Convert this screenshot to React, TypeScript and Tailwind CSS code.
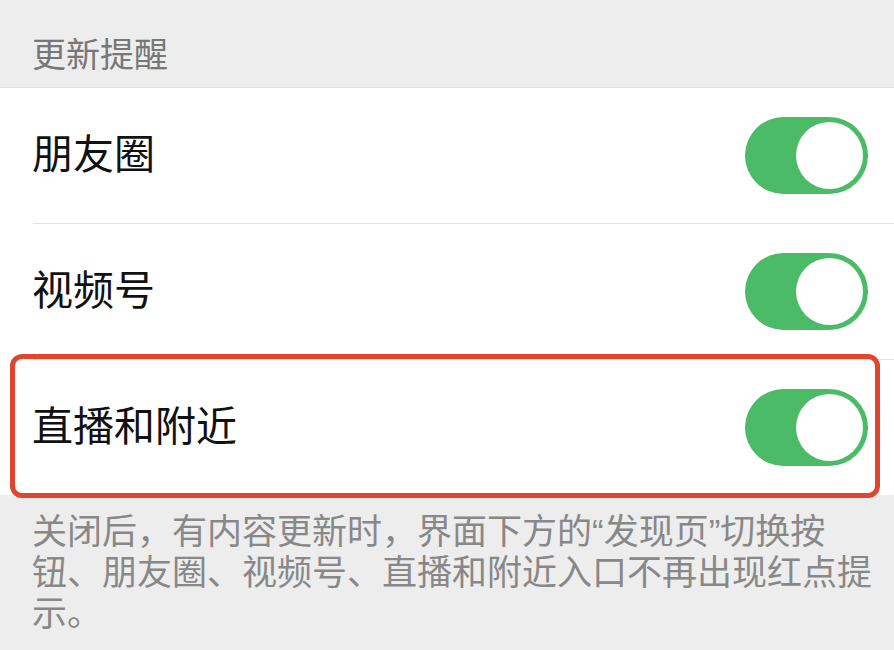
import { useState } from 'react'

const FONT = '"Liberation Sans", "Noto Sans CJK SC", sans-serif'

function Toggle({ on, onChange }: { on: boolean; onChange: () => void }) {
  return (
    <button
      onClick={onChange}
      className={`w-[123px] h-[77px] rounded-full p-[5px] flex items-center shrink-0 transition ${
        on ? 'bg-[#4cbb68] justify-end' : 'bg-[#e6e6e6] justify-start'
      }`}
    >
      <span className="block w-[67px] h-[67px] rounded-full bg-white" />
    </button>
  )
}

export default function App() {
  const [rows, setRows] = useState([
    { label: '朋友圈', on: true },
    { label: '视频号', on: true },
    { label: '直播和附近', on: true },
  ])

  const flip = (i: number) =>
    setRows((r) => r.map((x, j) => (j === i ? { ...x, on: !x.on } : x)))

  return (
    <div className="w-[894px] h-[650px] bg-[#ededed] overflow-hidden" style={{ fontFamily: FONT }}>
      <div className="px-[32px] pt-[35px] pb-[11px] text-[34px] leading-[41px] text-[#777777]">更新提醒</div>

      <div className="bg-white border-t border-[#e2e2e2]">
        {rows.map((r, i) => (
          <div key={r.label} className="relative">
            {i > 0 && <div className="ml-[33px] h-px bg-[#e3e3e3]" />}
            <div className="h-[135px] flex items-center justify-between pl-[32px] pr-[26px]">
              <span className="text-[41px] leading-none text-[#111111] -mt-[1px]">{r.label}</span>
              <Toggle on={r.on} onChange={() => flip(i)} />
            </div>
            {i === rows.length - 1 && (
              <div className="absolute left-[10px] right-[14px] top-[-5px] bottom-[-3px] border-[5px] border-[#e0462f] rounded-[12px] pointer-events-none" />
            )}
          </div>
        ))}
      </div>

      <div className="pl-[32px] pr-[17px] pt-[16px] text-[35px] leading-[41px] text-[#888888]">
        关闭后，有内容更新时，界面下方的“发现页”切换按钮、朋友圈、视频号、直播和附近入口不再出现红点提示。
      </div>
    </div>
  )
}
